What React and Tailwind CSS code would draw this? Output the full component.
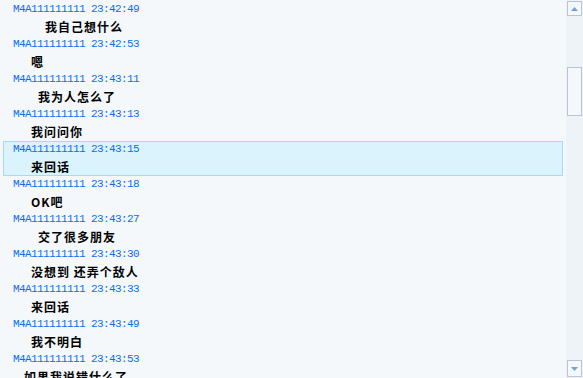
import React from "react";

const messages = [
  { time: "23:42:49", text: "我自己想什么", indent: 45 },
  { time: "23:42:53", text: "嗯", indent: 31 },
  { time: "23:43:11", text: "我为人怎么了", indent: 38 },
  { time: "23:43:13", text: "我问问你", indent: 31 },
  { time: "23:43:15", text: "来回话", indent: 31, active: true },
  { time: "23:43:18", text: "OK吧", indent: 31 },
  { time: "23:43:27", text: "交了很多朋友", indent: 38 },
  { time: "23:43:30", text: "没想到 还弄个敌人", indent: 31 },
  { time: "23:43:33", text: "来回话", indent: 31 },
  { time: "23:43:49", text: "我不明白", indent: 31 },
  { time: "23:43:53", text: "如果我说错什么了", indent: 24 },
];

const indents = {
  24: "pl-[20px]",
  31: "pl-[27px]",
  38: "pl-[34px]",
  45: "pl-[41px]",
};

function Row({ msg }) {
  return (
    <div
      className={`mx-[3px] h-[35px] border ${
        msg.active ? "border-[#a9daf5] bg-[#dbf3fd]" : "border-transparent"
      }`}
    >
      <div
        className="h-[14px] pl-[9px] text-[11px] leading-[14px] tracking-[-0.6px] text-[#0a6cf5]"
        style={{ fontFamily: '"Liberation Mono", "DejaVu Sans Mono", monospace' }}
      >
        M4A111111111 {msg.time}
      </div>
      <div
        className={`mt-[3px] h-[16px] ${indents[msg.indent]} text-[12px] font-bold leading-[16px] tracking-[1px] text-black`}
        style={{ fontFamily: '"Noto Sans CJK SC", "DejaVu Sans", sans-serif' }}
      >
        {msg.text}
      </div>
    </div>
  );
}

export default function App() {
  return (
    <div className="flex h-[378px] w-[583px] overflow-hidden bg-[#f4f8fb]">
      <div className="flex-1 overflow-hidden">
        <div className="mt-[1px]">
          {messages.map((m) => (
            <Row key={m.time} msg={m} />
          ))}
        </div>
      </div>
      <div className="flex w-[17px] flex-col bg-[#eef3f7] pl-[1px]">
        <div className="mt-[1px] flex h-[15px] w-[15px] items-center justify-center border border-[#b8c4d8] bg-[#f4f8fb]">
          <svg width="7" height="4" viewBox="0 0 7 4">
            <path d="M3.5 0 L7 4 L0 4 Z" fill="#6fa3d4" />
          </svg>
        </div>
        <div className="h-[51px]" />
        <div className="h-[49px] w-[15px] border border-[#b8c4d8] bg-[#f4f8fb]" />
        <div className="flex-1" />
        <div className="mb-[1px] flex h-[17px] w-[15px] items-center justify-center border border-[#b8c4d8] bg-[#f4f8fb]">
          <svg width="7" height="4" viewBox="0 0 7 4">
            <path d="M0 0 L7 0 L3.5 4 Z" fill="#6fa3d4" />
          </svg>
        </div>
      </div>
    </div>
  );
}
